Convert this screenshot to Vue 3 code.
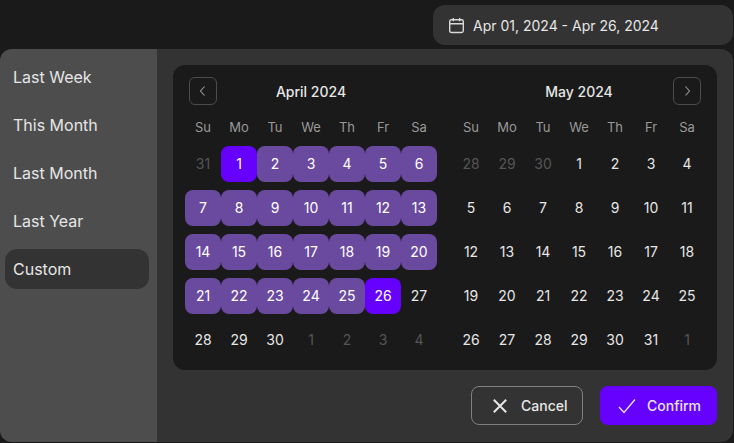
<script setup>
const presets = ["Last Week", "This Month", "Last Month", "Last Year", "Custom"];
const weekdays = ["Su", "Mo", "Tu", "We", "Th", "Fr", "Sa"];

// build a 5 week grid, the first cell and month length are enough here
const buildDays = (prevDays, startOffset, length, rangeEnd) => {
  const days = [];
  for (let i = 0; i < 35; i++) {
    const n = i - startOffset + 1;
    if (n < 1) days.push({ label: prevDays + n, muted: true });
    else if (n > length) days.push({ label: n - length, muted: true });
    else {
      days.push({
        label: n,
        inRange: rangeEnd > 0 && n <= rangeEnd,
        edge: rangeEnd > 0 && (n === 1 || n === rangeEnd),
      });
    }
  }
  return days;
};

const months = [
  { name: "April 2024", side: "prev", days: buildDays(31, 1, 30, 26) },
  { name: "May 2024", side: "next", days: buildDays(30, 3, 31, 0) },
];
</script>

<template>
  <div class="page">
    <div class="top-bar">
      <div class="trigger">
        <svg class="cal-icon" width="16" height="16" viewBox="0 0 16 16" fill="none">
          <rect x="1.6" y="2.6" width="12.8" height="12" rx="1.6" stroke="currentColor" stroke-width="1.3" />
          <path d="M1.6 6.3h12.8M5 .9v3M11 .9v3" stroke="currentColor" stroke-width="1.3" />
        </svg>
        <span>Apr 01, 2024 - Apr 26, 2024</span>
      </div>
    </div>

    <div class="modal">
      <aside class="sidebar">
        <div v-for="p in presets" :key="p" class="preset" :class="{ active: p === 'Custom' }">{{ p }}</div>
      </aside>

      <div class="main">
        <div class="calendar">
          <div v-for="m in months" :key="m.name" class="month">
            <div class="month-head" :class="m.side">
              <button v-if="m.side === 'prev'" class="nav">
                <svg width="12" height="12" viewBox="0 0 12 12" fill="none">
                  <path d="M7.5 1.5 3.5 6l4 4.5" stroke="currentColor" stroke-width="1.1" />
                </svg>
              </button>
              <span class="month-name">{{ m.name }}</span>
              <button v-if="m.side === 'next'" class="nav">
                <svg width="12" height="12" viewBox="0 0 12 12" fill="none">
                  <path d="M4.5 1.5 8.5 6l-4 4.5" stroke="currentColor" stroke-width="1.1" />
                </svg>
              </button>
            </div>
            <div class="grid weekdays">
              <span v-for="d in weekdays" :key="d" class="weekday">{{ d }}</span>
            </div>
            <div class="grid days">
              <span
                v-for="(d, i) in m.days"
                :key="i"
                class="day"
                :class="{ muted: d.muted, range: d.inRange, edge: d.edge }"
              >{{ d.label }}</span>
            </div>
          </div>
        </div>

        <div class="actions">
          <button class="btn cancel">
            <svg width="14" height="14" viewBox="0 0 14 14" fill="none">
              <path d="M.8.8l12.4 12.4M13.2.8.8 13.2" stroke="currentColor" stroke-width="2" />
            </svg>
            Cancel
          </button>
          <button class="btn confirm">
            <svg width="18" height="16" viewBox="0 0 18 16" fill="none">
              <path d="M1 9l5 5.5L17 1.5" stroke="currentColor" stroke-width="1.3" />
            </svg>
            Confirm
          </button>
        </div>
      </div>
    </div>
  </div>
</template>

<style>
body {
  background: #1a1a1a;
}
</style>

<style scoped>
.page {
  width: 734px;
  height: 443px;
  overflow: hidden;
  background: #1a1a1a;
  font-family: Inter, "Liberation Sans", sans-serif;
  color: #e6e6e6;
}

.top-bar {
  display: flex;
  justify-content: flex-end;
  padding: 5px 1px 4px 0;
}

.trigger {
  width: 300px;
  height: 40px;
  box-sizing: border-box;
  padding-left: 15px;
  display: flex;
  align-items: center;
  gap: 8px;
  background: #333333;
  border-radius: 12px;
  font-size: 14px;
}

.trigger .cal-icon {
  width: 17px;
  height: 17px;
  color: #d9d9d9;
}

.modal {
  width: 733px;
  height: 393px;
  display: flex;
  border-radius: 12px;
  overflow: hidden;
  background: #333333;
}

.sidebar {
  width: 157px;
  flex-shrink: 0;
  box-sizing: border-box;
  padding: 8px 8px 0 5px;
  background: #4d4d4d;
  display: flex;
  flex-direction: column;
  gap: 8px;
}

.preset {
  height: 40px;
  line-height: 40px;
  padding-left: 8px;
  border-radius: 12px;
  font-size: 16px;
  color: #e6e6e6;
}

.preset.active {
  background: #333333;
}

.main {
  flex: 1;
  padding: 16px 16px 0;
}

.calendar {
  width: 544px;
  height: 305px;
  box-sizing: border-box;
  padding: 12px 12px 0;
  display: flex;
  gap: 16px;
  background: #1a1a1a;
  border-radius: 12px;
}

.month {
  width: 252px;
}

.month-head {
  height: 28px;
  display: flex;
  align-items: center;
  position: relative;
  justify-content: center;
}

.month-name {
  font-size: 14px;
  font-weight: 500;
  color: #e6e6e6;
}

.nav {
  position: absolute;
  top: 0;
  width: 28px;
  height: 28px;
  padding: 0;
  display: flex;
  align-items: center;
  justify-content: center;
  background: transparent;
  border: 1px solid #4d4d4d;
  border-radius: 6px;
  color: #999999;
}

.prev .nav {
  left: 4px;
}

.next .nav {
  right: 4px;
}

.grid {
  display: grid;
  grid-template-columns: repeat(7, 36px);
}

.weekdays {
  margin-top: 10px;
  height: 24px;
  align-items: center;
  margin-bottom: 7px;
}

.weekday {
  text-align: center;
  font-size: 13px;
  color: #999999;
}

.days {
  row-gap: 8px;
  grid-auto-rows: 36px;
}

.day {
  display: flex;
  align-items: center;
  justify-content: center;
  padding-bottom: 1px;
  box-sizing: border-box;
  font-size: 14px;
  color: #e6e6e6;
}

.day.muted {
  color: #555555;
}

.day.range {
  background: #6a4a9f;
  border-radius: 8px;
  color: #ffffff;
}

.day.edge {
  background: #6600ff;
}

.actions {
  display: flex;
  justify-content: flex-end;
  gap: 17px;
  margin-top: 16px;
}

.btn {
  height: 39px;
  box-sizing: border-box;
  display: flex;
  align-items: center;
  border-radius: 8px;
  font-family: inherit;
  font-size: 14px;
  font-weight: 500;
  color: #e6e6e6;
  padding: 0;
}

.cancel {
  width: 112px;
  gap: 14px;
  padding-left: 21px;
  background: transparent;
  border: 1px solid #808080;
}

.confirm {
  width: 117px;
  gap: 11px;
  padding-left: 18px;
  background: #6600ff;
  border: none;
}
</style>
